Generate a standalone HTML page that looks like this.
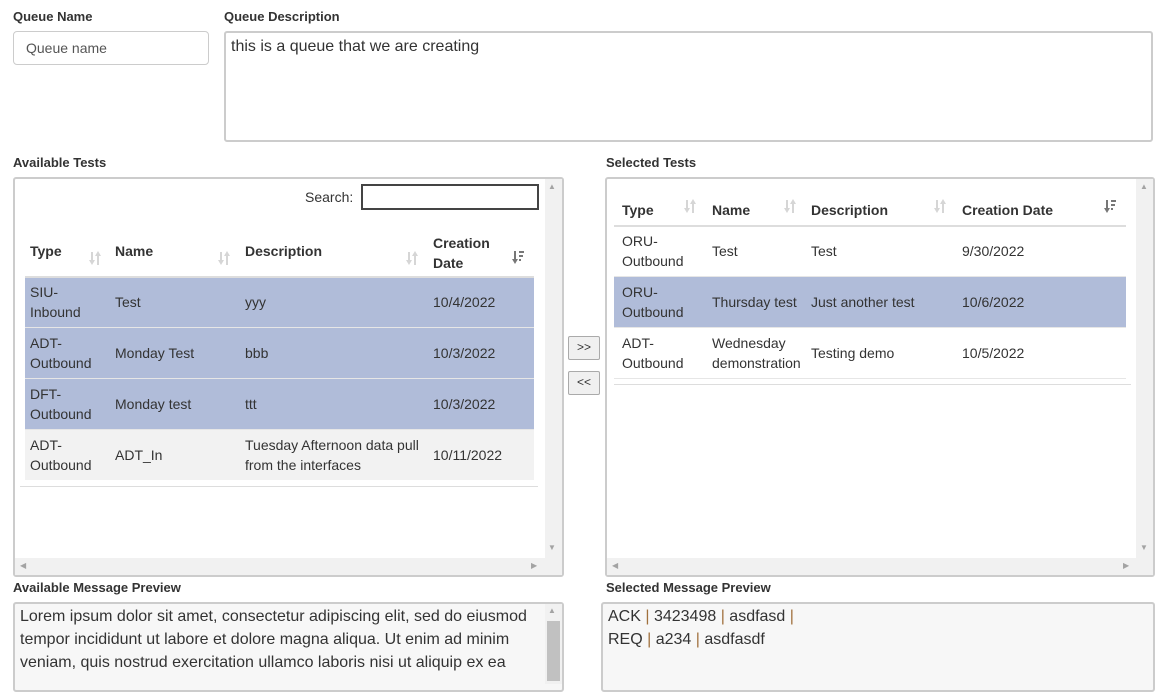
<!DOCTYPE html>
<html><head><meta charset="utf-8"><style>
*{box-sizing:border-box;margin:0;padding:0}
body{width:1162px;height:673px;overflow:hidden;background:#fff;font-family:"Liberation Sans",Arial,sans-serif;color:#333;position:relative}
.a{position:absolute}
.lbl{font-size:13px;font-weight:bold;color:#333}
.box{border:2px solid #ccc;border-radius:3px;background:#fff}
.vs{background:#f1f1f1}
.th{font-size:14px;font-weight:bold;color:#333}
.td{font-size:14px;color:#333;line-height:20px}
.sel{background:#b0bcd9}
.btn{border:1px solid #aaa;border-radius:2px;background:#f0f0f0;font-size:12px;text-align:center;line-height:21px;color:#333}
.tri{font-size:8px;color:#a3a3a3}
svg.s{position:absolute;width:12px;height:15px}
</style></head><body>
<svg width="0" height="0" style="position:absolute">
<defs>
<g id="both" fill="#d6d6d6"><rect x="2" y="1" width="2" height="9"/><path d="M0 9h6l-3 5z"/><rect x="8" y="5" width="2" height="9"/><path d="M6 5h6l-3-5z"/></g>
<g id="desc" fill="#777"><rect x="2" y="1" width="2" height="9"/><path d="M0 9h6l-3 5z"/><rect x="7" y="1" width="5" height="2"/><rect x="7" y="5" width="4" height="2"/><rect x="7" y="9" width="2" height="2"/></g>
</defs></svg>
<div class="a lbl" style="left:13px;top:9px">Queue Name</div>
<div class="a" style="left:13px;top:31px;width:196px;height:34px;border:1px solid #ccc;border-radius:4px;font-size:14px;color:#555;padding:8px 12px">Queue name</div>
<div class="a lbl" style="left:224px;top:9px">Queue Description</div>
<div class="a" style="left:224px;top:31px;width:929px;height:111px;border:2px solid #ccc;border-radius:3px;font-size:16px;padding:5px 5px">this is a queue that we are creating</div>

<div class="a lbl" style="left:13px;top:155px">Available Tests</div>
<div class="a box" style="left:13px;top:177px;width:551px;height:400px"></div>
<div class="a vs" style="left:545px;top:179px;width:17px;height:396px"></div>
<div class="a vs" style="left:15px;top:558px;width:547px;height:17px"></div>
<div class="a tri" style="left:548px;top:182px">▲</div>
<div class="a tri" style="left:548px;top:543px">▼</div>
<div class="a tri" style="left:20px;top:561px">◀</div>
<div class="a tri" style="left:531px;top:561px">▶</div>
<div class="a td" style="left:305px;top:187px">Search:</div>
<div class="a" style="left:361px;top:184px;width:178px;height:26px;border:2px solid #444"></div>

<div class="a" style="left:25px;top:276px;width:509px;height:2px;background:#ddd"></div>
<div class="a th" style="left:30px;top:243px">Type</div><svg class="s" style="left:89px;top:251px"><use href="#both"/></svg>
<div class="a th" style="left:115px;top:243px">Name</div><svg class="s" style="left:218px;top:251px"><use href="#both"/></svg>
<div class="a th" style="left:245px;top:243px">Description</div><svg class="s" style="left:406px;top:251px"><use href="#both"/></svg>
<div class="a th" style="left:433px;top:233px;line-height:20px">Creation<br>Date</div><svg class="s" style="left:512px;top:250px"><use href="#desc"/></svg>

<div class="a sel" style="left:25px;top:278px;width:509px;height:49px"></div>
<div class="a sel" style="left:25px;top:328px;width:509px;height:50px"></div>
<div class="a sel" style="left:25px;top:379px;width:509px;height:50px"></div>
<div class="a" style="left:25px;top:430px;width:509px;height:50px;background:#f2f2f2"></div>
<div class="a" style="left:25px;top:327px;width:509px;height:1px;background:#e6e6e6"></div>
<div class="a" style="left:25px;top:378px;width:509px;height:1px;background:#e6e6e6"></div>
<div class="a" style="left:25px;top:429px;width:509px;height:1px;background:#e6e6e6"></div>
<div class="a" style="left:20px;top:486px;width:518px;height:1px;background:#ddd"></div>

<div class="a td" style="left:30px;top:282px">SIU-<br>Inbound</div><div class="a td" style="left:115px;top:292px">Test</div><div class="a td" style="left:245px;top:292px">yyy</div><div class="a td" style="left:433px;top:292px">10/4/2022</div>
<div class="a td" style="left:30px;top:333px">ADT-<br>Outbound</div><div class="a td" style="left:115px;top:343px">Monday Test</div><div class="a td" style="left:245px;top:343px">bbb</div><div class="a td" style="left:433px;top:343px">10/3/2022</div>
<div class="a td" style="left:30px;top:384px">DFT-<br>Outbound</div><div class="a td" style="left:115px;top:394px">Monday test</div><div class="a td" style="left:245px;top:394px">ttt</div><div class="a td" style="left:433px;top:394px">10/3/2022</div>
<div class="a td" style="left:30px;top:435px">ADT-<br>Outbound</div><div class="a td" style="left:115px;top:445px">ADT_In</div><div class="a td" style="left:245px;top:435px">Tuesday Afternoon data pull<br>from the interfaces</div><div class="a td" style="left:433px;top:445px">10/11/2022</div>

<div class="a btn" style="left:568px;top:336px;width:32px;height:24px">&gt;&gt;</div>
<div class="a btn" style="left:568px;top:371px;width:32px;height:24px">&lt;&lt;</div>

<div class="a lbl" style="left:606px;top:155px">Selected Tests</div>
<div class="a box" style="left:605px;top:177px;width:550px;height:400px"></div>
<div class="a vs" style="left:1136px;top:179px;width:17px;height:396px"></div>
<div class="a vs" style="left:607px;top:558px;width:546px;height:17px"></div>
<div class="a tri" style="left:1140px;top:182px">▲</div>
<div class="a tri" style="left:1140px;top:543px">▼</div>
<div class="a tri" style="left:612px;top:561px">◀</div>
<div class="a tri" style="left:1123px;top:561px">▶</div>

<div class="a th" style="left:622px;top:202px">Type</div><svg class="s" style="left:684px;top:199px"><use href="#both"/></svg>
<div class="a th" style="left:712px;top:202px">Name</div><svg class="s" style="left:784px;top:199px"><use href="#both"/></svg>
<div class="a th" style="left:811px;top:202px">Description</div><svg class="s" style="left:934px;top:199px"><use href="#both"/></svg>
<div class="a th" style="left:962px;top:202px">Creation Date</div><svg class="s" style="left:1104px;top:199px"><use href="#desc"/></svg>
<div class="a" style="left:614px;top:225px;width:512px;height:2px;background:#ddd"></div>
<div class="a sel" style="left:614px;top:277px;width:512px;height:50px"></div>
<div class="a" style="left:614px;top:276px;width:512px;height:1px;background:#e6e6e6"></div>
<div class="a" style="left:614px;top:327px;width:512px;height:1px;background:#e6e6e6"></div>
<div class="a" style="left:614px;top:378px;width:512px;height:1px;background:#e6e6e6"></div>
<div class="a" style="left:614px;top:384px;width:517px;height:1px;background:#ddd"></div>
<div class="a td" style="left:622px;top:231px">ORU-<br>Outbound</div><div class="a td" style="left:712px;top:241px">Test</div><div class="a td" style="left:811px;top:241px">Test</div><div class="a td" style="left:962px;top:241px">9/30/2022</div>
<div class="a td" style="left:622px;top:282px">ORU-<br>Outbound</div><div class="a td" style="left:712px;top:292px">Thursday test</div><div class="a td" style="left:811px;top:292px">Just another test</div><div class="a td" style="left:962px;top:292px">10/6/2022</div>
<div class="a td" style="left:622px;top:333px">ADT-<br>Outbound</div><div class="a td" style="left:712px;top:333px">Wednesday<br>demonstration</div><div class="a td" style="left:811px;top:343px">Testing demo</div><div class="a td" style="left:962px;top:343px">10/5/2022</div>

<div class="a lbl" style="left:13px;top:580px">Available Message Preview</div>
<div class="a" style="left:13px;top:602px;width:551px;height:90px;border:2px solid #ccc;border-radius:3px;background:#f7f7f7"></div>
<div class="a vs" style="left:545px;top:604px;width:17px;height:80px"></div>
<div class="a" style="left:547px;top:621px;width:13px;height:60px;background:#c1c1c1"></div>
<div class="a tri" style="left:548px;top:606px">▲</div>
<div class="a" style="left:20px;top:605px;font-size:16px;line-height:23px;color:#333;width:525px">Lorem ipsum dolor sit amet, consectetur adipiscing elit, sed do eiusmod tempor incididunt ut labore et dolore magna aliqua. Ut enim ad minim veniam, quis nostrud exercitation ullamco laboris nisi ut aliquip ex ea</div>

<div class="a lbl" style="left:606px;top:580px">Selected Message Preview</div>
<div class="a" style="left:601px;top:602px;width:554px;height:90px;border:2px solid #ccc;border-radius:3px;background:#f7f7f7"></div>
<div class="a" style="left:608px;top:605px;font-size:16px;line-height:23px;color:#333">ACK <span style="color:#a0703c">|</span> 3423498 <span style="color:#a0703c">|</span> asdfasd <span style="color:#a0703c">|</span><br>REQ <span style="color:#a0703c">|</span> a234 <span style="color:#a0703c">|</span> asdfasdf</div>
</body></html>
